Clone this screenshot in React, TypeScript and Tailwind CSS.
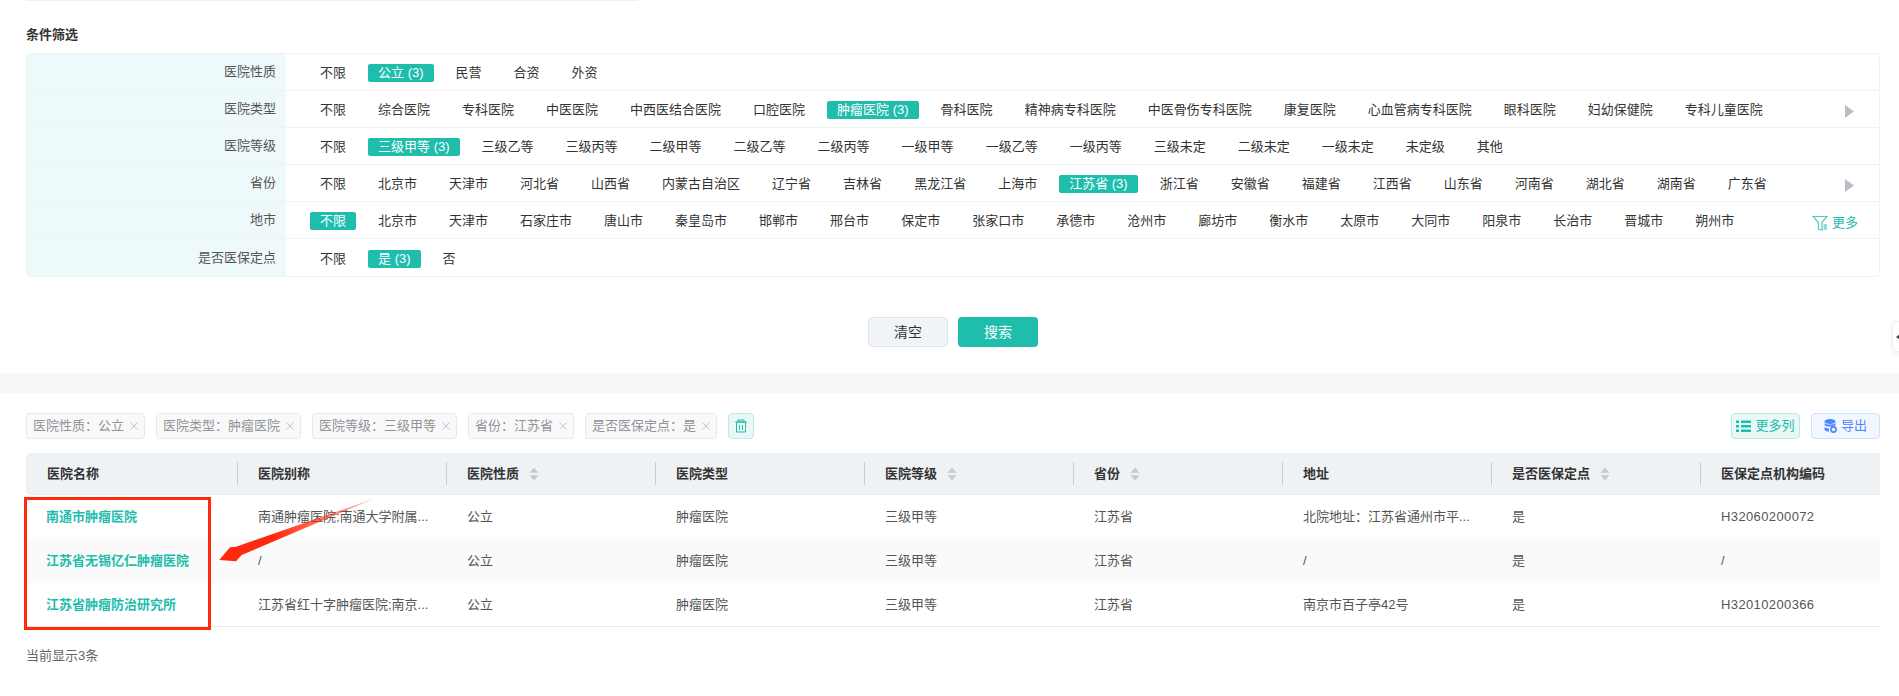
const filters = [
    { label: "医院性质", items: ["不限", "公立 (3)", "民营", "合资", "外资"], active: "公立 (3)" },
    {
        label: "医院类型",
        items: ["不限", "综合医院", "专科医院", "中医医院", "中西医结合医院", "口腔医院", "肿瘤医院 (3)", "骨科医院", "精神病专科医院", "中医骨伤专科医院", "康复医院", "心血管病专科医院", "眼科医院", "妇幼保健院", "专科儿童医院"],
        active: "肿瘤医院 (3)",
        extra: "arrow",
    },
    {
        label: "医院等级",
        items: ["不限", "三级甲等 (3)", "三级乙等", "三级丙等", "二级甲等", "二级乙等", "二级丙等", "一级甲等", "一级乙等", "一级丙等", "三级未定", "二级未定", "一级未定", "未定级", "其他"],
        active: "三级甲等 (3)",
    },
    {
        label: "省份",
        items: ["不限", "北京市", "天津市", "河北省", "山西省", "内蒙古自治区", "辽宁省", "吉林省", "黑龙江省", "上海市", "江苏省 (3)", "浙江省", "安徽省", "福建省", "江西省", "山东省", "河南省", "湖北省", "湖南省", "广东省"],
        active: "江苏省 (3)",
        extra: "arrow",
    },
    {
        label: "地市",
        items: ["不限", "北京市", "天津市", "石家庄市", "唐山市", "秦皇岛市", "邯郸市", "邢台市", "保定市", "张家口市", "承德市", "沧州市", "廊坊市", "衡水市", "太原市", "大同市", "阳泉市", "长治市", "晋城市", "朔州市"],
        active: "不限",
        extra: "more",
    },
    { label: "是否医保定点", items: ["不限", "是 (3)", "否"], active: "是 (3)" },
];

const tags = ["医院性质：公立", "医院类型：肿瘤医院", "医院等级：三级甲等", "省份：江苏省", "是否医保定点：是"];

const columns = [
    { title: "医院名称" },
    { title: "医院别称" },
    { title: "医院性质", sort: true },
    { title: "医院类型" },
    { title: "医院等级", sort: true },
    { title: "省份", sort: true },
    { title: "地址" },
    { title: "是否医保定点", sort: true },
    { title: "医保定点机构编码" },
];

const rows = [
    ["南通市肿瘤医院", "南通肿瘤医院;南通大学附属...", "公立", "肿瘤医院", "三级甲等", "江苏省", "北院地址：江苏省通州市平...", "是", "H32060200072"],
    ["江苏省无锡亿仁肿瘤医院", "/", "公立", "肿瘤医院", "三级甲等", "江苏省", "/", "是", "/"],
    ["江苏省肿瘤防治研究所", "江苏省红十字肿瘤医院;南京...", "公立", "肿瘤医院", "三级甲等", "江苏省", "南京市百子亭42号", "是", "H32010200366"],
];

function SortIcon() {
    return (
        <svg width="10" height="14" viewBox="0 0 10 14" className="ml-[10px] shrink-0">
            <path d="M5 0.5 L9.5 5.8 H0.5 Z" fill="#c6cad3" />
            <path d="M5 13.5 L9.5 8.2 H0.5 Z" fill="#c6cad3" />
        </svg>
    );
}

function FilterRow({ filter, last }: { filter: (typeof filters)[number]; last: boolean }) {
    return (
        <div className={`flex h-[37px] ${last ? "h-[36px]" : "border-b border-[#f0f2f4]"}`}>
            <div className="flex w-[259px] shrink-0 items-center justify-end bg-[#eef9fb] pr-[10px] text-[#555]">
                {filter.label}
            </div>
            <div className="flex min-w-0 flex-1 items-center pl-[24px] pt-[2px]">
                <div className="flex gap-[12px] whitespace-nowrap">
                    {filter.items.map((item) => (
                        <span
                            key={item}
                            className={`h-[18px] rounded-[2px] px-[10px] leading-[18px] ${
                                item === filter.active ? "bg-[#1fbdac] text-white" : "text-[#333]"
                            }`}
                        >
                            {item}
                        </span>
                    ))}
                </div>
                {filter.extra === "arrow" && (
                    <svg width="9" height="13" viewBox="0 0 9 13" className="ml-auto mr-[25px] mt-[3px]">
                        <path d="M0 0 L9 6.5 L0 13 Z" fill="#b9bdc7" />
                    </svg>
                )}
                {filter.extra === "more" && (
                    <div className="ml-auto mr-[21px] mt-[3px] flex items-center gap-[4px] text-[#1fbdac]">
                        <svg width="16" height="16" viewBox="0 0 16 16" fill="none" stroke="#4fcbbd" strokeWidth="1.2">
                            <path d="M1 1.5 H15 L10 7.5 V15 L6.5 14 V7.5 Z" />
                            <path d="M11.5 10 H15 M11.5 12 H15 M11.5 14 H15" stroke="#1fbdac" />
                        </svg>
                        <span>更多</span>
                    </div>
                )}
            </div>
        </div>
    );
}

export default function App() {
    return (
        <div className="relative h-[696px] w-[1899px] overflow-hidden bg-white font-['Liberation_Sans','Noto_Sans_CJK_SC',sans-serif] text-[13px]">
            <div className="ml-[26px] h-px w-[612px] bg-[#eef0f2]" />
            <h3 className="ml-[26px] mt-[25px] text-[13px] font-bold leading-[18px] text-[#333]">条件筛选</h3>

            <div className="ml-[26px] mr-[19px] mt-[9px] overflow-hidden rounded-[4px] border border-[#f0f2f4]">
                {filters.map((filter, i) => (
                    <FilterRow key={filter.label} filter={filter} last={i === filters.length - 1} />
                ))}
            </div>

            <div className="mt-[40px] flex justify-center gap-[10px] pl-[7px] text-[14px]">
                <button className="h-[30px] w-[80px] rounded-[4px] border border-[#dfe3ea] bg-[#f0f3f8] text-[#333]">清空</button>
                <button className="h-[30px] w-[80px] rounded-[4px] bg-[#1fbdac] text-white">搜索</button>
            </div>

            <div className="mt-[26px] h-[20px] bg-[#f6f7f9]" />

            <div className="ml-[26px] mr-[19px] mt-[20px] flex h-[26px] items-center">
                <div className="flex items-center gap-[11px]">
                    {tags.map((tag) => (
                        <span
                            key={tag}
                            className="flex h-[26px] items-center gap-[6px] rounded-[4px] border border-[#e9e9eb] bg-[#f9f9fa] px-[6px] text-[#909399]"
                        >
                            {tag}
                            <svg width="8" height="8" viewBox="0 0 8 8" stroke="#c0c4cc" strokeWidth="1">
                                <path d="M0.5 0.5 L7.5 7.5 M7.5 0.5 L0.5 7.5" />
                            </svg>
                        </span>
                    ))}
                    <span className="flex h-[26px] w-[26px] items-center justify-center rounded-[4px] border border-[#bce9e3] bg-[#e9f8f6]">
                        <svg width="12" height="14" viewBox="0 0 12 14" fill="none" stroke="#1fbdac" strokeWidth="1">
                            <path d="M3 2.5 V1 H9 V2.5" />
                            <path d="M0.5 3 H11.5" strokeWidth="1.6" />
                            <path d="M1.5 4 V13 H10.5 V4" />
                            <path d="M4.5 6 V11 M7.5 6 V11" />
                        </svg>
                    </span>
                </div>
                <div className="ml-auto flex gap-[11px]">
                    <button className="flex h-[26px] w-[69px] items-center justify-center gap-[4px] rounded-[4px] border border-[#bce9e3] bg-[#e9f8f6] text-[#1fbdac]">
                        <svg width="15" height="13" viewBox="0 0 15 13" fill="#1fbdac">
                            <path d="M0 0.5 H3 V3 H0 Z M5 0.5 H15 V3 H5 Z M0 5 H3 V7.5 H0 Z M5 5 H15 V7.5 H5 Z M0 9.5 H3 V12 H0 Z M5 9.5 H15 V12 H5 Z" />
                        </svg>
                        更多列
                    </button>
                    <button className="flex h-[26px] w-[69px] items-center justify-center gap-[4px] rounded-[4px] border border-[#cfe2fb] bg-[#f2f7ff] text-[#4d86ff]">
                        <svg width="13" height="14" viewBox="0 0 13 14" fill="#4d86ff">
                            <ellipse cx="6" cy="2.5" rx="5.5" ry="2.5" />
                            <path d="M0.5 4 C2 6 10 6 11.5 4 V6 C10 8 2 8 0.5 6 Z" />
                            <path d="M0.5 8 C1.5 9 3 9.3 5 9.4 V12.6 C3 12.5 1 12 0.5 10.8 Z" />
                            <circle cx="9.5" cy="10.5" r="2.6" fill="none" stroke="#4d86ff" strokeWidth="1.6" />
                        </svg>
                        导出
                    </button>
                </div>
            </div>

            <div className="ml-[26px] mr-[19px] mt-[14px]">
                <div className="grid h-[42px] grid-cols-[212px_repeat(7,209px)_179px] items-center rounded-l-[5px] border-b border-[#e8ebee] bg-[#eff2f4] font-bold text-[#333]">
                    {columns.map((col, i) => (
                        <div key={col.title} className={`flex items-center ${i === 0 ? "pl-[21px]" : "-ml-px"}`}>
                            {i > 0 && <span className="mr-[20px] h-[23px] w-px bg-[#c8cdd0]" />}
                            <span>{col.title}</span>
                            {col.sort && <SortIcon />}
                        </div>
                    ))}
                </div>
                {rows.map((row, r) => (
                    <div
                        key={row[0]}
                        className={`grid h-[44px] grid-cols-[212px_repeat(7,209px)_179px] items-center text-[#555] ${
                            r === 1 ? "bg-[#fafafa]" : ""
                        } ${r === 2 ? "border-b border-[#e8ebee]" : ""}`}
                    >
                        {row.map((cell, i) => (
                            <div
                                key={i}
                                className={
                                    i === 0
                                        ? "pl-[20px] font-bold text-[#1fbdac]"
                                        : i === 8
                                          ? "pl-[20px] tracking-[0.38px]"
                                          : "pl-[20px]"
                                }
                            >
                                {cell}
                            </div>
                        ))}
                    </div>
                ))}
            </div>

            <p className="ml-[26px] mt-[20px] leading-[18px] text-[#666]">当前显示3条</p>

            {/* 截图上的红色标注 */}
            <div className="absolute left-[24px] top-[497px] h-[133px] w-[187px] border-[3px] border-[#ff2a0d]" />
            <svg width="170" height="70" viewBox="0 0 170 70" className="absolute left-[215px] top-[495px]">
                <defs>
                    <linearGradient id="arrowFade" x1="160" y1="3" x2="60" y2="45" gradientUnits="userSpaceOnUse">
                        <stop offset="0" stopColor="#ff2a0d" stopOpacity="0.25" />
                        <stop offset="1" stopColor="#ff2a0d" />
                    </linearGradient>
                </defs>
                <path d="M4.3 65 L15 52.3 L21 51.7 L160 3.3 L26.7 60 L21 66.3 Z" fill="url(#arrowFade)" />
            </svg>

            <div className="absolute left-[1892px] top-[321px] flex h-[31px] w-[10px] items-center rounded-l-[5px] border border-[#eceef2] bg-white pl-[3px] shadow-[0_2px_6px_rgba(0,0,0,0.06)]">
                <svg width="4" height="6" viewBox="0 0 4 6">
                    <path d="M4 0 L0 3 L4 6 Z" fill="#444" />
                </svg>
            </div>
        </div>
    );
}
